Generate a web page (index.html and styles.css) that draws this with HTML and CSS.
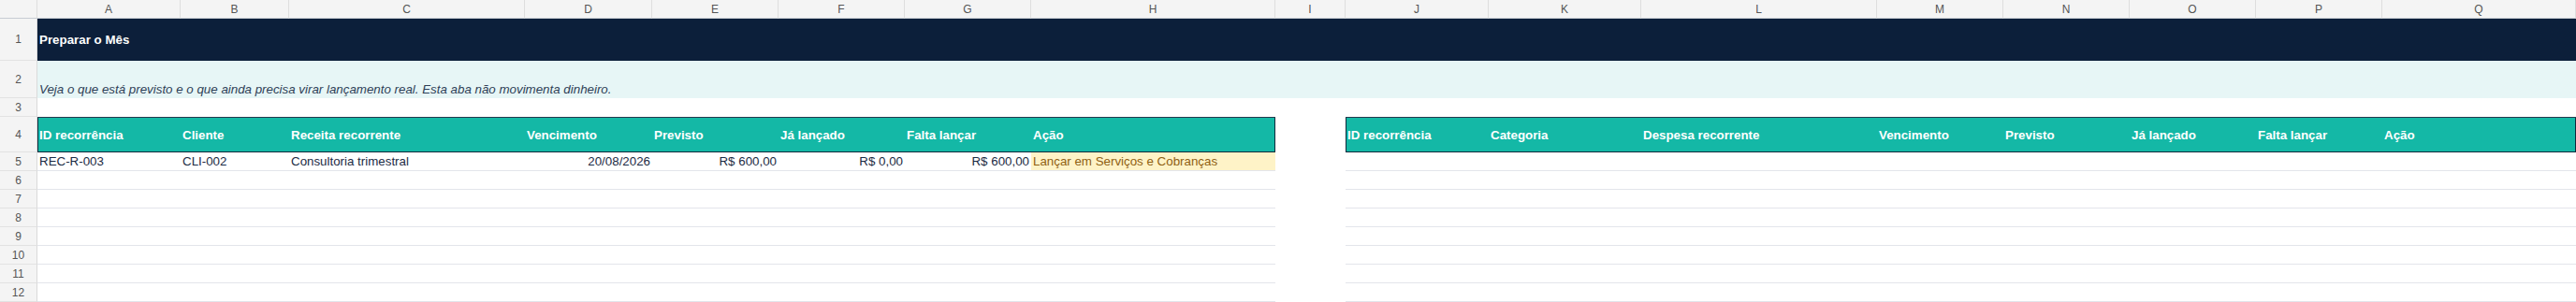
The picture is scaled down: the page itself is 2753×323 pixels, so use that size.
FILE: index.html
```html
<!DOCTYPE html>
<html lang="pt-BR">
<head>
    <meta charset="UTF-8">
    <title>Preparar o Mês</title>
    <link rel="stylesheet" href="styles.css">
</head>
<body>
    <div class="sheet">
        <!-- column letters -->
        <div class="row col-head">
            <div class="corner"></div>
            <div>A</div><div>B</div><div>C</div><div>D</div><div>E</div><div>F</div><div>G</div><div>H</div>
            <div>I</div><div>J</div><div>K</div><div>L</div><div>M</div><div>N</div><div>O</div><div>P</div><div>Q</div>
        </div>

        <div class="row r-title">
            <div class="num">1</div>
            <div class="title">Preparar o Mês</div>
        </div>

        <div class="row r-note">
            <div class="num">2</div>
            <div class="note">Veja o que está previsto e o que ainda precisa virar lançamento real. Esta aba não movimenta dinheiro.</div>
        </div>

        <div class="row r-empty">
            <div class="num">3</div>
        </div>

        <div class="row r-head">
            <div class="num">4</div>
            <div class="th first">ID recorrência</div>
            <div class="th">Cliente</div>
            <div class="th">Receita recorrente</div>
            <div class="th">Vencimento</div>
            <div class="th">Previsto</div>
            <div class="th">Já lançado</div>
            <div class="th">Falta lançar</div>
            <div class="th last">Ação</div>
            <div class="gap"></div>
            <div class="th first">ID recorrência</div>
            <div class="th">Categoria</div>
            <div class="th">Despesa recorrente</div>
            <div class="th">Vencimento</div>
            <div class="th">Previsto</div>
            <div class="th">Já lançado</div>
            <div class="th">Falta lançar</div>
            <div class="th last">Ação</div>
        </div>

        <div class="row r-data">
            <div class="num">5</div>
            <div class="td">REC-R-003</div>
            <div class="td">CLI-002</div>
            <div class="td">Consultoria trimestral</div>
            <div class="td right">20/08/2026</div>
            <div class="td right">R$ 600,00</div>
            <div class="td right">R$ 0,00</div>
            <div class="td right">R$ 600,00</div>
            <div class="td action">Lançar em Serviços e Cobranças</div>
            <div class="gap"></div>
            <div class="td"></div><div class="td"></div><div class="td"></div><div class="td"></div>
            <div class="td"></div><div class="td"></div><div class="td"></div><div class="td"></div>
        </div>

        <div class="row r-data">
            <div class="num">6</div>
            <div class="td"></div><div class="td"></div><div class="td"></div><div class="td"></div>
            <div class="td"></div><div class="td"></div><div class="td"></div><div class="td"></div>
            <div class="gap"></div>
            <div class="td"></div><div class="td"></div><div class="td"></div><div class="td"></div>
            <div class="td"></div><div class="td"></div><div class="td"></div><div class="td"></div>
        </div>
        <div class="row r-data">
            <div class="num">7</div>
            <div class="td"></div><div class="td"></div><div class="td"></div><div class="td"></div>
            <div class="td"></div><div class="td"></div><div class="td"></div><div class="td"></div>
            <div class="gap"></div>
            <div class="td"></div><div class="td"></div><div class="td"></div><div class="td"></div>
            <div class="td"></div><div class="td"></div><div class="td"></div><div class="td"></div>
        </div>
        <div class="row r-data">
            <div class="num">8</div>
            <div class="td"></div><div class="td"></div><div class="td"></div><div class="td"></div>
            <div class="td"></div><div class="td"></div><div class="td"></div><div class="td"></div>
            <div class="gap"></div>
            <div class="td"></div><div class="td"></div><div class="td"></div><div class="td"></div>
            <div class="td"></div><div class="td"></div><div class="td"></div><div class="td"></div>
        </div>
        <div class="row r-data">
            <div class="num">9</div>
            <div class="td"></div><div class="td"></div><div class="td"></div><div class="td"></div>
            <div class="td"></div><div class="td"></div><div class="td"></div><div class="td"></div>
            <div class="gap"></div>
            <div class="td"></div><div class="td"></div><div class="td"></div><div class="td"></div>
            <div class="td"></div><div class="td"></div><div class="td"></div><div class="td"></div>
        </div>
        <div class="row r-data">
            <div class="num">10</div>
            <div class="td"></div><div class="td"></div><div class="td"></div><div class="td"></div>
            <div class="td"></div><div class="td"></div><div class="td"></div><div class="td"></div>
            <div class="gap"></div>
            <div class="td"></div><div class="td"></div><div class="td"></div><div class="td"></div>
            <div class="td"></div><div class="td"></div><div class="td"></div><div class="td"></div>
        </div>
        <div class="row r-data">
            <div class="num">11</div>
            <div class="td"></div><div class="td"></div><div class="td"></div><div class="td"></div>
            <div class="td"></div><div class="td"></div><div class="td"></div><div class="td"></div>
            <div class="gap"></div>
            <div class="td"></div><div class="td"></div><div class="td"></div><div class="td"></div>
            <div class="td"></div><div class="td"></div><div class="td"></div><div class="td"></div>
        </div>
        <div class="row r-data">
            <div class="num">12</div>
            <div class="td"></div><div class="td"></div><div class="td"></div><div class="td"></div>
            <div class="td"></div><div class="td"></div><div class="td"></div><div class="td"></div>
            <div class="gap"></div>
            <div class="td"></div><div class="td"></div><div class="td"></div><div class="td"></div>
            <div class="td"></div><div class="td"></div><div class="td"></div><div class="td"></div>
        </div>
    </div>
</body>
</html>
```

FILE: styles.css
```css
body {
    margin: 0;
    font-family: "Liberation Sans", Arial, sans-serif;
    font-size: 13.33px;
    color: #1c2b44;
    background-color: #fff;
}

.sheet {
    width: 2753px;
    overflow: hidden;
}

.row {
    display: grid;
    grid-template-columns: 40px 153px 116px 252px 136px 135px 135px 135px 261px 75px 153px 163px 252px 135px 135px 135px 135px 1fr;
}

.row > div {
    box-sizing: border-box;
    display: flex;
    align-items: center;
    padding: 0 2px;
    white-space: nowrap;
    overflow: hidden;
}

/* column letters */
.col-head {
    height: 20px;
}

.col-head > div {
    justify-content: center;
    background-color: #f4f4f4;
    color: #555;
    font-size: 12px;
    border-right: 1px solid #dedede;
    border-bottom: 1px solid #c7ccd3;
}

/* row numbers */
.num {
    justify-content: center;
    background-color: #f4f4f4;
    color: #555;
    font-size: 12px;
    border-right: 1px solid #dadada;
    border-bottom: 1px solid #e2e2e2;
}

.r-title {
    height: 45px;
}

.title {
    grid-column: 2 / -1;
    background-color: #0c1f3a;
    color: #fff;
    font-weight: bold;
}

.r-note {
    height: 40px;
}

.note {
    grid-column: 2 / -1;
    background-color: #e7f6f6;
    color: #2e3f57;
    font-style: italic;
    align-items: flex-end !important;
    padding-bottom: 2px !important;
}

.r-empty {
    height: 20px;
}

.r-head {
    height: 38px;
}

.th {
    background-color: #14b8a6;
    color: #fff;
    font-weight: bold;
    box-shadow: inset 0 1px #23394c, inset 0 -1px #0f2a3b;
}

.th.first {
    box-shadow: inset 0 1px #23394c, inset 0 -1px #0f2a3b, inset 1px 0 #0f2a3b;
}

.th.last {
    box-shadow: inset 0 1px #23394c, inset 0 -1px #0f2a3b, inset -1px 0 #0f2a3b;
}

.r-data {
    height: 20px;
}

.td {
    border-bottom: 1px solid #e3e5eb;
}

.td.right {
    justify-content: flex-end;
}

.td.action {
    background-color: #fef3c7;
    color: #8f5f12;
}
```
